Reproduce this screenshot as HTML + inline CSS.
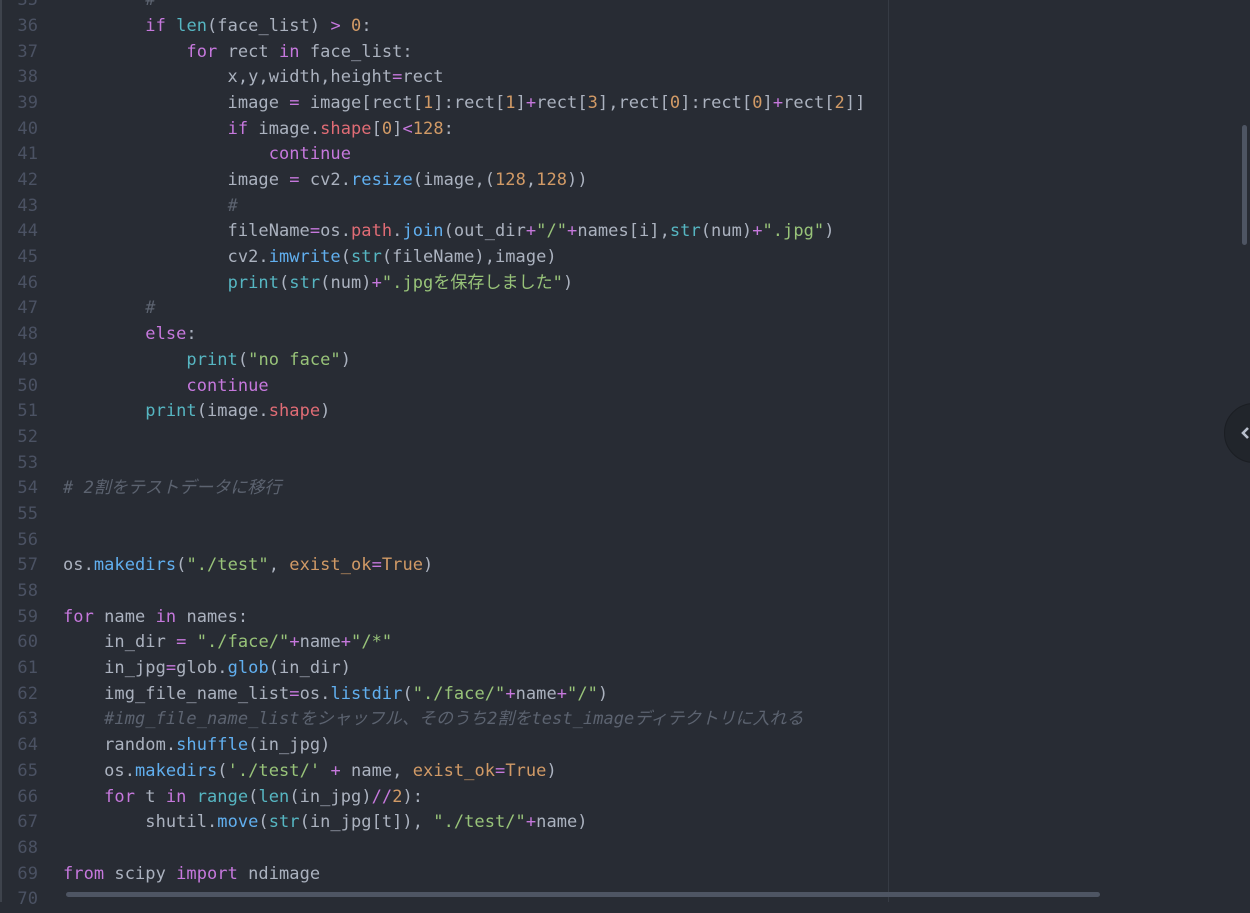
<!DOCTYPE html>
<html><head><meta charset="utf-8"><style>
html,body{margin:0;padding:0;}
body{width:1250px;height:902px;overflow:hidden;background:#282c34;position:relative;font-family:"DejaVu Sans Mono","Liberation Mono","Noto Sans CJK JP",monospace;font-size:17px;letter-spacing:0.05px;color:#abb2bf;}
.lb{position:absolute;left:0;top:0;width:2px;height:902px;background:#3e434c;}
.code{position:absolute;left:0;top:-11.8px;}
.l{height:25.7px;line-height:25.7px;white-space:pre;position:relative;}
.n{position:absolute;left:0;width:38px;text-align:right;color:#4b5263;}
.t{position:absolute;left:63px;}
.k{color:#c678dd}.f{color:#61afef}.b{color:#56b6c2}.d{color:#d19a66}.s{color:#98c379}.c{color:#5c6370;font-style:italic}.p{color:#e06c75}
.wrap{position:absolute;left:888px;top:0;width:1px;height:902px;background:#363b44;}
.vs{position:absolute;left:1242px;top:125px;width:5px;height:120px;border-radius:3px;background:#4e5563;}
.hs{position:absolute;left:66px;top:892px;width:1034px;height:5px;border-radius:3px;background:#4e5563;}
.circ{position:absolute;left:1224px;top:403px;width:58px;height:58px;border-radius:50%;background:#21252b;border:1px solid #1b1e23;}
.circ svg{position:absolute;left:15px;top:22px;}
</style></head><body>
<div class="lb"></div>
<div class="wrap"></div>
<div class="code">
<div class="l"><span class="n">35</span><span class="t">        <span class="c">#</span></span></div>
<div class="l"><span class="n">36</span><span class="t">        <span class="k">if</span> <span class="b">len</span>(face_list) <span class="k">&gt;</span> <span class="d">0</span>:</span></div>
<div class="l"><span class="n">37</span><span class="t">            <span class="k">for</span> rect <span class="k">in</span> face_list:</span></div>
<div class="l"><span class="n">38</span><span class="t">                x,y,width,height<span class="k">=</span>rect</span></div>
<div class="l"><span class="n">39</span><span class="t">                image <span class="k">=</span> image[rect[<span class="d">1</span>]:rect[<span class="d">1</span>]<span class="k">+</span>rect[<span class="d">3</span>],rect[<span class="d">0</span>]:rect[<span class="d">0</span>]<span class="k">+</span>rect[<span class="d">2</span>]]</span></div>
<div class="l"><span class="n">40</span><span class="t">                <span class="k">if</span> image.<span class="p">shape</span>[<span class="d">0</span>]<span class="k">&lt;</span><span class="d">128</span>:</span></div>
<div class="l"><span class="n">41</span><span class="t">                    <span class="k">continue</span></span></div>
<div class="l"><span class="n">42</span><span class="t">                image <span class="k">=</span> cv2.<span class="f">resize</span>(image,(<span class="d">128</span>,<span class="d">128</span>))</span></div>
<div class="l"><span class="n">43</span><span class="t">                <span class="c">#</span></span></div>
<div class="l"><span class="n">44</span><span class="t">                fileName<span class="k">=</span>os.<span class="p">path</span>.<span class="f">join</span>(out_dir<span class="k">+</span><span class="s">"/"</span><span class="k">+</span>names[i],<span class="b">str</span>(num)<span class="k">+</span><span class="s">".jpg"</span>)</span></div>
<div class="l"><span class="n">45</span><span class="t">                cv2.<span class="f">imwrite</span>(<span class="b">str</span>(fileName),image)</span></div>
<div class="l"><span class="n">46</span><span class="t">                <span class="b">print</span>(<span class="b">str</span>(num)<span class="k">+</span><span class="s">".jpgを保存しました"</span>)</span></div>
<div class="l"><span class="n">47</span><span class="t">        <span class="c">#</span></span></div>
<div class="l"><span class="n">48</span><span class="t">        <span class="k">else</span>:</span></div>
<div class="l"><span class="n">49</span><span class="t">            <span class="b">print</span>(<span class="s">"no face"</span>)</span></div>
<div class="l"><span class="n">50</span><span class="t">            <span class="k">continue</span></span></div>
<div class="l"><span class="n">51</span><span class="t">        <span class="b">print</span>(image.<span class="p">shape</span>)</span></div>
<div class="l"><span class="n">52</span><span class="t"></span></div>
<div class="l"><span class="n">53</span><span class="t"></span></div>
<div class="l"><span class="n">54</span><span class="t"><span class="c"># 2割をテストデータに移行</span></span></div>
<div class="l"><span class="n">55</span><span class="t"></span></div>
<div class="l"><span class="n">56</span><span class="t"></span></div>
<div class="l"><span class="n">57</span><span class="t">os.<span class="f">makedirs</span>(<span class="s">"./test"</span>, <span class="d">exist_ok</span><span class="k">=</span><span class="d">True</span>)</span></div>
<div class="l"><span class="n">58</span><span class="t"></span></div>
<div class="l"><span class="n">59</span><span class="t"><span class="k">for</span> name <span class="k">in</span> names:</span></div>
<div class="l"><span class="n">60</span><span class="t">    in_dir <span class="k">=</span> <span class="s">"./face/"</span><span class="k">+</span>name<span class="k">+</span><span class="s">"/*"</span></span></div>
<div class="l"><span class="n">61</span><span class="t">    in_jpg<span class="k">=</span>glob.<span class="f">glob</span>(in_dir)</span></div>
<div class="l"><span class="n">62</span><span class="t">    img_file_name_list<span class="k">=</span>os.<span class="f">listdir</span>(<span class="s">"./face/"</span><span class="k">+</span>name<span class="k">+</span><span class="s">"/"</span>)</span></div>
<div class="l"><span class="n">63</span><span class="t">    <span class="c">#img_file_name_listをシャッフル、そのうち2割をtest_imageディテクトリに入れる</span></span></div>
<div class="l"><span class="n">64</span><span class="t">    random.<span class="f">shuffle</span>(in_jpg)</span></div>
<div class="l"><span class="n">65</span><span class="t">    os.<span class="f">makedirs</span>(<span class="s">'./test/'</span> <span class="k">+</span> name, <span class="d">exist_ok</span><span class="k">=</span><span class="d">True</span>)</span></div>
<div class="l"><span class="n">66</span><span class="t">    <span class="k">for</span> t <span class="k">in</span> <span class="b">range</span>(<span class="b">len</span>(in_jpg)<span class="k">//</span><span class="d">2</span>):</span></div>
<div class="l"><span class="n">67</span><span class="t">        shutil.<span class="f">move</span>(<span class="b">str</span>(in_jpg[t]), <span class="s">"./test/"</span><span class="k">+</span>name)</span></div>
<div class="l"><span class="n">68</span><span class="t"></span></div>
<div class="l"><span class="n">69</span><span class="t"><span class="k">from</span> scipy <span class="k">import</span> ndimage</span></div>
<div class="l"><span class="n">70</span><span class="t"></span></div>
</div>
<div class="vs"></div>
<div class="hs"></div>
<div class="circ"><svg width="12" height="14" viewBox="0 0 12 14"><path d="M8 2 L3 7 L8 12" fill="none" stroke="#b8bfcc" stroke-width="2.6"/></svg></div>
</body></html>
